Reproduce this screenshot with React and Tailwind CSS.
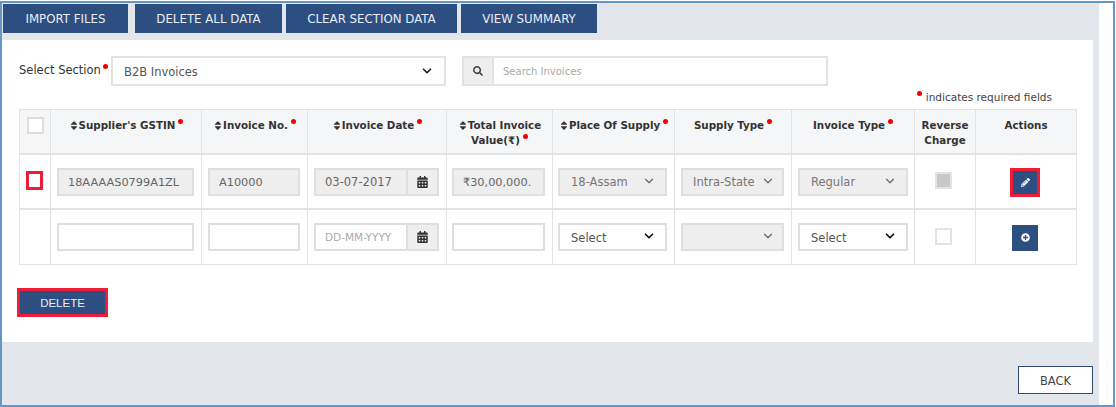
import React from 'react';
import { FaSearch, FaCalendarAlt, FaPencilAlt, FaPlusCircle, FaSort } from 'react-icons/fa';
import { ChevronDown } from 'lucide-react';

const font = { fontFamily: '"DejaVu Sans", sans-serif' };

function Dot({ className = '' }) {
  return <span className={`inline-block w-[5px] h-[5px] rounded-full bg-[#f00000] align-top ${className}`} />;
}

function Head({ children, sort, req, width }) {
  return (
    <th className={`border border-[#e3e3e3] border-b-2 bg-[#f5f6f7] align-top pt-[8px] px-1 text-[10.3px] leading-[15px] font-bold text-[#333] ${width}`}>
      {sort && <FaSort className="inline-block w-[10px] h-[11px] -mt-[2px] text-[#333]" />}
      {children}
      {req && <Dot className="ml-[3px] mt-[1px]" />}
    </th>
  );
}

function Cell({ children }) {
  return <td className="border border-[#e3e3e3] border-b-2 [tr:last-child>&]:border-b align-top">{children}</td>;
}

function Field({ value, disabled, width, left }) {
  return (
    <div className={`h-[28px] border-2 border-[#dfdfdf] flex items-center text-[11.3px] text-[#666] ${width} ${left} ${disabled ? 'bg-[#eeeeee]' : 'bg-white'}`}>
      <span className="pl-[9px] pt-[3px] whitespace-nowrap">{value}</span>
    </div>
  );
}

function DateField({ value, disabled, placeholder }) {
  return (
    <div className={`ml-[6px] h-[28px] w-[125px] border-2 border-[#dfdfdf] flex items-center ${disabled ? 'bg-[#eeeeee]' : 'bg-white'}`}>
      <span className={`flex-1 pl-[9px] pt-[3px] whitespace-nowrap ${placeholder ? 'text-[10.5px] text-[#aaa]' : 'text-[11.5px] text-[#666]'}`}>{value}</span>
      <span className="w-[31px] h-full border-l-2 border-[#dfdfdf] bg-[#eeeeee] flex items-center justify-center">
        <FaCalendarAlt className="w-[11px] h-[12px] text-[#333]" />
      </span>
    </div>
  );
}

function SelectField({ value, disabled, width, left, dark, tight }) {
  return (
    <div className={`h-[28px] border-2 border-[#dfdfdf] flex items-center justify-between text-[11.5px] ${width} ${left} ${disabled ? 'bg-[#eeeeee] text-[#777]' : 'bg-white text-[#555]'} ${tight ? 'pl-[10px] pr-[7px]' : 'pl-[11px] pr-[9px]'}`}>
      <span className={`whitespace-nowrap ${dark ? 'pt-[5px]' : 'pt-[3px]'}`}>{value}</span>
      <ChevronDown className={`w-[14px] h-[14px] -mt-[2px] shrink-0 ${dark ? 'text-[#111]' : 'text-[#666]'}`} strokeWidth={dark ? 3 : 2} />
    </div>
  );
}

export default function App() {
  return (
    <div className="w-[1116px] h-[407px] bg-white pt-px pr-px" style={font}>
      <div className="h-[406px] border-2 border-[#6596c9] bg-white flex overflow-hidden">
        <div className="w-[1097px] bg-[#e3e6ea] flex flex-col">
          {/* Tabs */}
          <div className="flex h-[37px] pt-px pl-px text-[#e8edf5] text-[11.8px]">
            <button className="w-[125px] h-[29px] pt-[3px] bg-[#2c4e81]">IMPORT FILES</button>
            <button className="ml-[7px] w-[147px] h-[29px] pt-[3px] bg-[#2c4e81]">DELETE ALL DATA</button>
            <button className="ml-[4px] w-[171px] h-[29px] pt-[3px] bg-[#2c4e81]">CLEAR SECTION DATA</button>
            <button className="ml-[4px] w-[136px] h-[29px] pt-[3px] bg-[#2c4e81]">VIEW SUMMARY</button>
          </div>

          {/* Card */}
          <div className="w-[1091px] h-[302px] bg-white pl-[17px] pt-[16px]">
            <div className="flex h-[29px]">
              <label className="w-[92px] text-[11.5px] leading-[29px] text-[#333] whitespace-nowrap">
                Select Section<Dot className="ml-[2px] mt-[8px]" />
              </label>
              <div className="w-[335px] h-[30px] border-2 border-[#e3e3e3] flex items-center justify-between pl-[11px] pr-[10px] text-[11.5px] text-[#555]">
                <span className="pt-[3px]">B2B Invoices</span>
                <ChevronDown className="w-[14px] h-[14px] text-[#222]" strokeWidth={3} />
              </div>
              <div className="ml-[16px] w-[366px] h-[30px] border-2 border-[#e3e3e3] flex items-center">
                <span className="w-[30px] h-full bg-[#eeeeee] border-r-2 border-[#e3e3e3] flex items-center justify-center">
                  <FaSearch className="w-[10px] h-[10px] text-[#444]" />
                </span>
                <span className="pl-[9px] text-[10px] text-[#aaa]">Search Invoices</span>
              </div>
            </div>

            <div className="w-[1058px] h-[24px] flex justify-end items-end pb-[4px] pr-[25px] text-[10.5px] leading-[15px] text-[#444]">
              <Dot className="mr-[4px] mb-[9px]" />indicates required fields
            </div>

            <table className="w-[1057px] table-fixed border-collapse border border-[#e3e3e3]">
              <thead>
                <tr className="h-[44px]">
                  <th className="w-[31px] border border-[#e3e3e3] border-b-2 bg-[#f5f6f7] align-top pt-[7px] pl-[7px]">
                    <div className="w-[17px] h-[17px] border-2 border-[#dddddd] bg-white" />
                  </th>
                  <Head sort req width="w-[151px]">Supplier's GSTIN</Head>
                  <Head sort req width="w-[106px]">Invoice No.</Head>
                  <Head sort req width="w-[139px]">Invoice Date</Head>
                  <Head sort req width="w-[106px]">Total Invoice Value(₹)</Head>
                  <Head sort req width="w-[122px]">Place Of Supply</Head>
                  <Head req width="w-[117px]">Supply Type</Head>
                  <Head req width="w-[123px]">Invoice Type</Head>
                  <Head width="w-[61px]">Reverse Charge</Head>
                  <Head width="w-[101px]">Actions</Head>
                </tr>
              </thead>
              <tbody>
                <tr className="h-[55px]">
                  <Cell>
                    <div className="ml-[6px] mt-[16px] w-[17px] h-[19px] border-[3px] border-[#ee1c37] bg-white" />
                  </Cell>
                  <Cell><div className="pt-[13px]"><Field value="18AAAAS0799A1ZL" disabled width="w-[137px]" left="ml-[6px]" /></div></Cell>
                  <Cell><div className="pt-[13px]"><Field value="A10000" disabled width="w-[92px]" left="ml-[6px]" /></div></Cell>
                  <Cell><div className="pt-[13px]"><DateField value="03-07-2017" disabled /></div></Cell>
                  <Cell><div className="pt-[13px]"><Field value="₹30,00,000." disabled width="w-[93px]" left="ml-[5px]" /></div></Cell>
                  <Cell><div className="pt-[13px]"><SelectField value="18-Assam" disabled width="w-[109px]" left="ml-[5px]" /></div></Cell>
                  <Cell><div className="pt-[13px]"><SelectField value="Intra-State" disabled tight width="w-[103px]" left="ml-[6px]" /></div></Cell>
                  <Cell><div className="pt-[13px]"><SelectField value="Regular" disabled width="w-[110px]" left="ml-[6px]" /></div></Cell>
                  <Cell><div className="ml-[20px] mt-[17px] w-[17px] h-[17px] border-2 border-[#e3e3e3] bg-[#c8c8c8]" /></Cell>
                  <Cell>
                    <div className="ml-[34px] mt-[13px] w-[30px] h-[29px] border-[3px] border-[#ee1c37] bg-[#2c4e81] flex items-center justify-center">
                      <FaPencilAlt className="w-[9px] h-[9px] text-white" />
                    </div>
                  </Cell>
                </tr>
                <tr className="h-[56px]">
                  <Cell />
                  <Cell><div className="pt-[13px]"><Field width="w-[137px]" left="ml-[6px]" /></div></Cell>
                  <Cell><div className="pt-[13px]"><Field width="w-[92px]" left="ml-[6px]" /></div></Cell>
                  <Cell><div className="pt-[13px]"><DateField value="DD-MM-YYYY" placeholder /></div></Cell>
                  <Cell><div className="pt-[13px]"><Field width="w-[93px]" left="ml-[5px]" /></div></Cell>
                  <Cell><div className="pt-[13px]"><SelectField value="Select" dark width="w-[109px]" left="ml-[5px]" /></div></Cell>
                  <Cell><div className="pt-[13px]"><SelectField value="" disabled tight width="w-[103px]" left="ml-[6px]" /></div></Cell>
                  <Cell><div className="pt-[13px]"><SelectField value="Select" dark width="w-[110px]" left="ml-[6px]" /></div></Cell>
                  <Cell><div className="ml-[20px] mt-[18px] w-[17px] h-[17px] border-2 border-[#e3e3e3] bg-white" /></Cell>
                  <Cell>
                    <div className="ml-[36px] mt-[15px] w-[26px] h-[26px] bg-[#2c4e81] flex items-center justify-center">
                      <FaPlusCircle className="w-[9px] h-[9px] text-white" />
                    </div>
                  </Cell>
                </tr>
              </tbody>
            </table>

            <button className="-ml-[2px] mt-[23px] w-[91px] h-[29px] pt-[3px] border-[3px] border-[#ee1c37] bg-[#2c4e81] text-[#e8edf5] text-[11.5px]" style={{ fontFamily: '"Liberation Sans", sans-serif' }}>
              DELETE
            </button>
          </div>

          {/* Footer */}
          <div className="w-[1091px] flex justify-end pt-[24px]">
            <button className="w-[75px] h-[28px] pt-[4px] bg-white border border-[#2f4a6b] text-[11.5px] text-[#444]">BACK</button>
          </div>
        </div>
      </div>
    </div>
  );
}
